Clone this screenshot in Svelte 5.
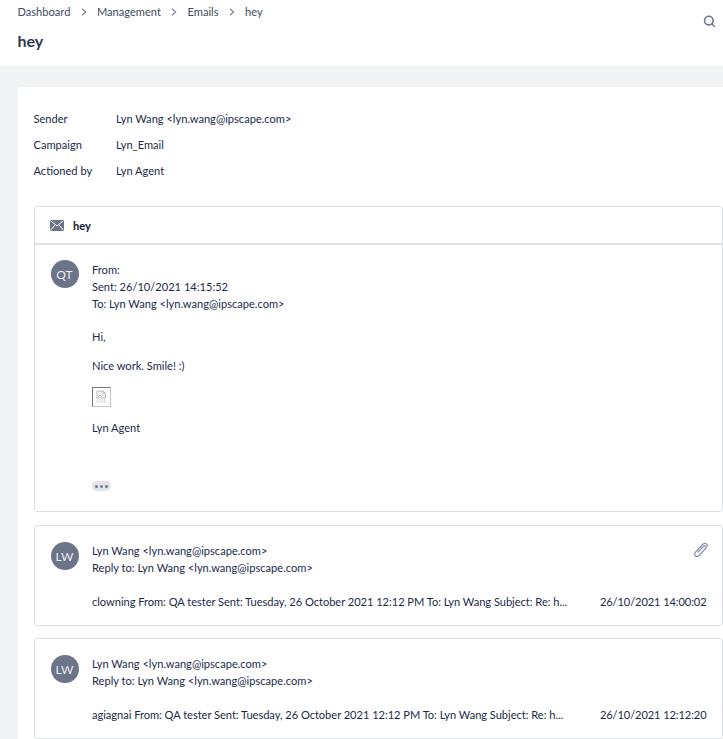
<script>
    const details = [
        { label: "Sender", value: "Lyn Wang <lyn.wang@ipscape.com>" },
        { label: "Campaign", value: "Lyn_Email" },
        { label: "Actioned by", value: "Lyn Agent" }
    ]

    const replies = [
        {
            snippet: "clowning From: QA tester Sent: Tuesday, 26 October 2021 12:12 PM To: Lyn Wang Subject: Re: h...",
            date: "26/10/2021 14:00:02",
            attachment: true
        },
        {
            snippet: "agiagnai From: QA tester Sent: Tuesday, 26 October 2021 12:12 PM To: Lyn Wang Subject: Re: h...",
            date: "26/10/2021 12:12:20",
            attachment: false
        }
    ]
</script>

<div class="page">
    <header class="top">
        <nav class="crumbs">
            <span>Dashboard</span>
            <svg class="chev" width="6" height="8" viewBox="0 0 6 8"><path d="M1 .8 4.6 4 1 7.2" /></svg>
            <span>Management</span>
            <svg class="chev" width="6" height="8" viewBox="0 0 6 8"><path d="M1 .8 4.6 4 1 7.2" /></svg>
            <span>Emails</span>
            <svg class="chev" width="6" height="8" viewBox="0 0 6 8"><path d="M1 .8 4.6 4 1 7.2" /></svg>
            <span>hey</span>
        </nav>
        <h1>hey</h1>
        <svg class="search" width="13" height="13" viewBox="0 0 13 13">
            <circle cx="5.8" cy="5.6" r="4.3" />
            <path d="M8.8 8.8 11.6 11.8" />
        </svg>
    </header>

    <main class="content">
        <section class="card">
            <dl class="details">
                {#each details as row}
                    <div class="detail">
                        <dt>{row.label}</dt>
                        <dd>{row.value}</dd>
                    </div>
                {/each}
            </dl>

            <div class="panel first">
                <div class="subject">
                    <svg width="14" height="11" viewBox="0 0 14 11">
                        <rect width="14" height="11" fill="#6b7488" />
                        <path d="M.5 .6 7 6 13.500 .6M.5 10.400 5 4.800M13.500 10.400 9 4.800" fill="none" stroke="#fff" stroke-width="1" />
                    </svg>
                    <strong>hey</strong>
                </div>
                <div class="message">
                    <div class="avatar">QT</div>
                    <div class="body">
                        <p>From:</p>
                        <p>Sent: 26/10/2021 14:15:52</p>
                        <p>To: Lyn Wang &lt;lyn.wang@ipscape.com&gt;</p>
                        <p class="para hi">Hi,</p>
                        <p class="para nice">Nice work. Smile! :)</p>
                        <div class="broken">
                            <svg width="13" height="13" viewBox="0 0 13 13">
                                <path d="M2 1h6l2.500 2.500V8H2z" fill="#f2f2f2" stroke="#bdbdbd" />
                                <path d="M8 1v2.500h2.500M3 7l2-2 1.500 1.500L8 5" fill="none" stroke="#bdbdbd" />
                                <path d="M1.500 10h10M1.500 12h10" stroke="#bdbdbd" stroke-dasharray="1.500 1" />
                            </svg>
                        </div>
                        <p class="para agent">Lyn Agent</p>
                        <div class="more"><i></i><i></i><i></i></div>
                    </div>
                </div>
            </div>

            {#each replies as reply}
                <div class="panel reply">
                    <div class="avatar">LW</div>
                    <div class="body">
                        <p>Lyn Wang &lt;lyn.wang@ipscape.com&gt;</p>
                        <p>Reply to: Lyn Wang &lt;lyn.wang@ipscape.com&gt;</p>
                        <div class="summary">
                            <span class="snippet">{reply.snippet}</span>
                            <span class="date">{reply.date}</span>
                        </div>
                    </div>
                    {#if reply.attachment}
                        <svg class="clip" width="15" height="15" viewBox="0 0 15 15">
                            <path d="M4.800 10.300 10.300 4.400c.7-.8 1.800-.9 2.400-.3.600.6.500 1.600-.2 2.400L6.300 13.200c-1.200 1.300-2.900 1.500-3.900.6-1-.9-.9-2.600.3-3.900L9 3c1.500-1.600 3.400-2 4.500-1.100.8.600 1 1.500.8 2.400" />
                        </svg>
                    {/if}
                </div>
            {/each}
        </section>
    </main>
</div>

<style>
    :global(body){
        background-color: #f2f3f5;
        overflow: hidden;
    }
    .page{
        font-family: Lato, "Liberation Sans", sans-serif;
        font-size: 11.1px;
        line-height: 17px;
        color: #1b2a4a;
        height: 739px;
        overflow: hidden;
    }
    .top{
        position: relative;
        background-color: #fff;
        height: 67px;
        padding: 3px 18px 0 17.500px;
        box-sizing: border-box;
        border-bottom: 1px solid #eeeff2;
    }
    .crumbs{
        display: flex;
        align-items: center;
        gap: 10.300px;
        color: #3f4a63;
    }
    .chev{
        fill: none;
        stroke: #7b8496;
        stroke-width: 1.2;
    }
    h1{
        margin: 11px 0 0;
        font-size: 16px;
        line-height: 20px;
        font-weight: 700;
        color: #2b3752;
    }
    .search{
        position: absolute;
        top: 15px;
        right: 7px;
        fill: none;
        stroke: #6b7790;
        stroke-width: 1.6;
    }
    .content{
        padding: 20px 0 0 18px;
    }
    .card{
        background-color: #fff;
        border-radius: 3px 0 0 0;
        padding: 18px 0 12px 15.500px;
    }
    .details{
        margin: 0 0 23px;
    }
    .detail{
        display: flex;
        height: 26px;
        align-items: center;
    }
    dt{
        width: 82.500px;
    }
    dd{
        margin: 0;
    }
    p{
        margin: 0;
    }
    .panel{
        width: 689px;
        box-sizing: border-box;
        border: 1px solid #dfe0e4;
        border-radius: 3px;
        margin-bottom: 12px;
    }
    .first{
        margin-bottom: 13px;
    }
    .subject{
        display: flex;
        align-items: center;
        gap: 9px;
        height: 36px;
        padding-left: 15.500px;
        border-bottom: 2px solid #e0e1e6;
    }
    .subject strong{
        font-weight: 900;
        color: #1f2a44;
    }
    .message{
        display: flex;
        padding: 16px 16px 0;
        height: 266px;
        box-sizing: border-box;
    }
    .avatar{
        flex: none;
        width: 28px;
        height: 28px;
        border-radius: 50%;
        background-color: #6b7488;
        color: #e8eaf0;
        display: flex;
        align-items: center;
        justify-content: center;
        font-size: 12px;
        margin-right: 13.500px;
        margin-top: -1px;
    }
    .reply .avatar{
        margin-top: 0;
    }
    .body{
        flex: 1;
        min-width: 0;
    }
    .para{
        margin-top: 16px;
    }
    .nice{
        margin-top: 12px;
    }
    .broken{
        box-sizing: border-box;
        width: 19px;
        height: 20px;
        margin-top: 13px;
        padding: 2px;
        border: 1px solid;
        border-color: #777 #c4c4c4 #c4c4c4 #777;
    }
    .broken svg{
        display: block;
    }
    .agent{
        margin-top: 12px;
    }
    .more{
        display: flex;
        align-items: center;
        justify-content: center;
        gap: 2px;
        width: 19px;
        height: 10px;
        margin-top: 45px;
        border-radius: 5px;
        background-color: #e2e4e9;
    }
    .more i{
        width: 3px;
        height: 3px;
        border-radius: 50%;
        background-color: #6b7790;
    }
    .reply{
        position: relative;
        display: flex;
        height: 101px;
        padding: 16px 15px 0 16px;
    }
    .summary{
        display: flex;
        justify-content: space-between;
        margin-top: 17px;
    }
    .snippet{
        white-space: nowrap;
        letter-spacing: -0.03px;
    }
    .date{
        white-space: nowrap;
        letter-spacing: -0.1px;
    }
    .clip{
        position: absolute;
        top: 16px;
        right: 14px;
        fill: none;
        stroke: #7f8ba3;
        stroke-width: 1.2;
    }
</style>
